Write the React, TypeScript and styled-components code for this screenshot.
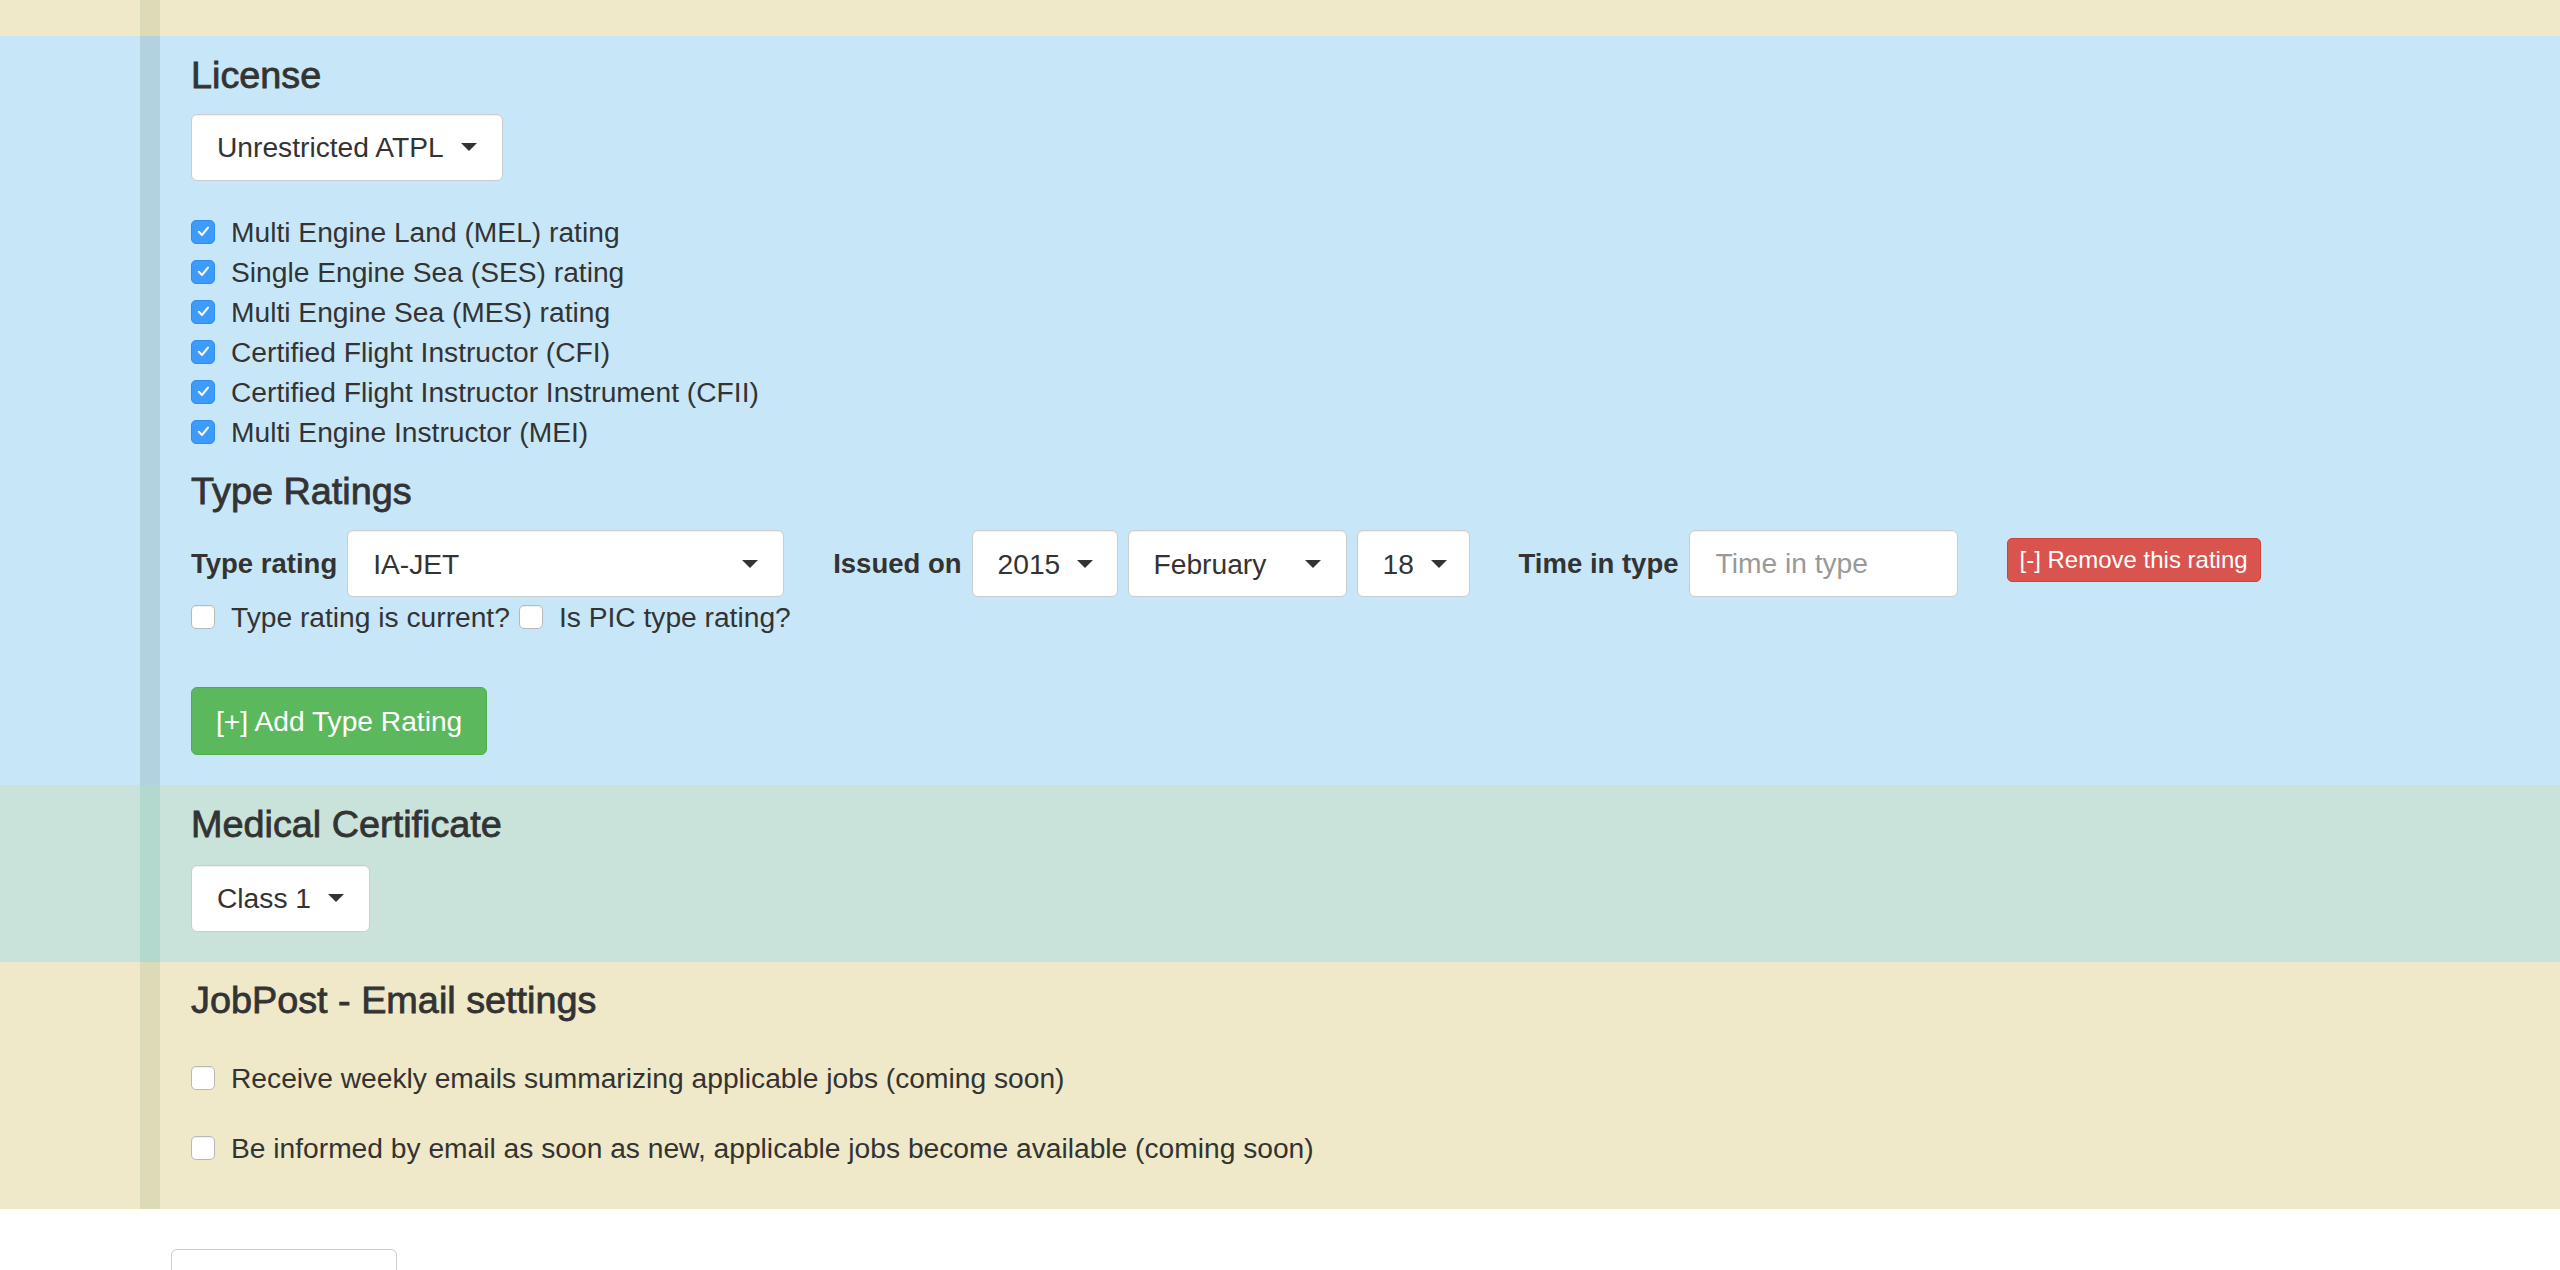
import React from 'react';
import styled, { createGlobalStyle } from 'styled-components';

const GlobalStyle = createGlobalStyle`
  html, body {
    margin: 0;
    padding: 0;
    background: #fff;
  }
  body {
    font-family: "Liberation Sans", Arial, sans-serif;
    font-size: 28.2px;
    color: #333;
  }
  * {
    box-sizing: border-box;
  }
`;

const Section = styled.section<{ $bg: string }>`
  background: ${(p) => p.$bg};
  padding-left: 140px;
`;

const Inner = styled.div<{ $bar: string; $pt: number; $pb: number; $h?: number }>`
  border-left: 20px solid ${(p) => p.$bar};
  padding: ${(p) => p.$pt}px 0 ${(p) => p.$pb}px 31px;
  ${(p) => (p.$h ? `height: ${p.$h}px;` : '')}
`;

const Heading = styled.h3`
  margin: 0;
  font-size: 37.8px;
  line-height: 39.6px;
  font-weight: 400;
  -webkit-text-stroke: 0.8px #333;
`;

const Field = styled.div<{ $mt: number }>`
  margin-top: ${(p) => p.$mt}px;
`;

const Dropdown = styled.button<{ $width?: number }>`
  display: inline-flex;
  align-items: center;
  justify-content: space-between;
  gap: 17px;
  width: ${(p) => (p.$width ? `${p.$width}px` : 'auto')};
  height: 67px;
  padding: 0 25px;
  background: #fff;
  border: 1px solid #ccc;
  border-radius: 6px;
  box-shadow: inset 0 1px 1px rgba(0, 0, 0, 0.06);
  font: inherit;
  line-height: 40px;
  color: #333;
  text-align: left;
  cursor: pointer;
`;

const Caret = styled.span`
  width: 0;
  height: 0;
  border-top: 8px solid #333;
  border-left: 8px solid transparent;
  border-right: 8px solid transparent;
  flex-shrink: 0;
`;

const CheckList = styled.div<{ $mt: number }>`
  display: flex;
  flex-direction: column;
  margin-top: ${(p) => p.$mt}px;
`;

const CheckLabel = styled.label`
  display: inline-flex;
  align-items: center;
  gap: 16px;
  height: 40px;
  line-height: 40px;
  white-space: nowrap;
  cursor: pointer;
`;

const Box = styled.span<{ $checked: boolean }>`
  display: inline-flex;
  align-items: center;
  justify-content: center;
  width: 24px;
  height: 24px;
  flex-shrink: 0;
  border-radius: 5px;
  background: ${(p) => (p.$checked ? '#3d9bfb' : '#fff')};
  border: 1px solid ${(p) => (p.$checked ? '#2f8cef' : '#b8b8b8')};
  box-shadow: ${(p) => (p.$checked ? 'none' : 'inset 0 1px 1px rgba(0,0,0,0.06)')};
`;

const InlineChecks = styled.div`
  display: flex;
  gap: 9px;
`;

const FormRow = styled.div`
  display: flex;
  align-items: center;
  gap: 49px;
  margin-top: 19px;
`;

const Group = styled.div`
  display: flex;
  align-items: center;
  gap: 10px;
`;

const BoldLabel = styled.span`
  font-size: 27.5px;
  font-weight: 700;
  white-space: nowrap;
`;

const TextInput = styled.input`
  width: 269px;
  height: 67px;
  padding: 0 26px;
  border: 1px solid #ccc;
  border-radius: 6px;
  box-shadow: inset 0 1px 1px rgba(0, 0, 0, 0.06);
  font: inherit;
  color: #333;
  background: #fff;
  outline: none;
  &::placeholder {
    color: #999;
  }
`;

const RemoveButton = styled.button`
  height: 44px;
  padding: 0 12px;
  margin-bottom: 8px;
  background: #d9534f;
  border: 1px solid #d43f3a;
  border-radius: 5px;
  color: #fff;
  font-family: inherit;
  font-size: 24px;
  line-height: 42px;
  white-space: nowrap;
  cursor: pointer;
`;

const AddButton = styled.button`
  margin-top: 50px;
  height: 68px;
  padding: 0 24px;
  background: #5cb85c;
  border: 1px solid #4cae4c;
  border-radius: 6px;
  color: #fff;
  font: inherit;
  line-height: 40px;
  cursor: pointer;
`;

const EmailRow = styled.div<{ $mt: number }>`
  margin-top: ${(p) => p.$mt}px;
`;

const Footer = styled.div`
  padding: 40px 0 0 171px;
`;

const OutlineButton = styled.button`
  width: 226px;
  height: 70px;
  background: #fff;
  border: 1px solid #ccc;
  border-radius: 6px;
  font: inherit;
`;

const Checkbox: React.FC<{ checked?: boolean; label: string }> = ({ checked = false, label }) => (
  <CheckLabel>
    <Box $checked={checked}>
      {checked && (
        <svg width="15" height="15" viewBox="0 0 15 15">
          <path d="M2.8 7.8 L6 11 L12 3.6" fill="none" stroke="#fff" strokeWidth="2" strokeLinecap="round" strokeLinejoin="round" />
        </svg>
      )}
    </Box>
    {label}
  </CheckLabel>
);

const Select: React.FC<{ value: string; width?: number }> = ({ value, width }) => (
  <Dropdown type="button" $width={width}>
    <span>{value}</span>
    <Caret />
  </Dropdown>
);

const ratings = [
  'Multi Engine Land (MEL) rating',
  'Single Engine Sea (SES) rating',
  'Multi Engine Sea (MES) rating',
  'Certified Flight Instructor (CFI)',
  'Certified Flight Instructor Instrument (CFII)',
  'Multi Engine Instructor (MEI)',
];

const BEIGE = '#efe9c9';
const BEIGE_BAR = '#dddab8';

const App: React.FC = () => (
  <>
    <GlobalStyle />
    <Section $bg={BEIGE}>
      <Inner $bar={BEIGE_BAR} $pt={0} $pb={0} $h={36} />
    </Section>

    <Section $bg="#c7e7f8">
      <Inner $bar="#b3d2e0" $pt={20} $pb={30}>
        <Heading>License</Heading>
        <Field $mt={18}>
          <Select value="Unrestricted ATPL" />
        </Field>
        <CheckList $mt={31}>
          {ratings.map((r) => (
            <Checkbox key={r} checked label={r} />
          ))}
        </CheckList>
        <Field $mt={20}>
          <Heading>Type Ratings</Heading>
        </Field>
        <FormRow>
          <Group>
            <BoldLabel>Type rating</BoldLabel>
            <Select value="IA-JET" width={437} />
          </Group>
          <Group>
            <BoldLabel>Issued on</BoldLabel>
            <Select value="2015" width={146} />
            <Select value="February" width={219} />
            <Select value="18" width={113} />
          </Group>
          <Group>
            <BoldLabel>Time in type</BoldLabel>
            <TextInput placeholder="Time in type" />
          </Group>
          <RemoveButton type="button">[-] Remove this rating</RemoveButton>
        </FormRow>
        <InlineChecks>
          <Checkbox label="Type rating is current?" />
          <Checkbox label="Is PIC type rating?" />
        </InlineChecks>
        <AddButton type="button">[+] Add Type Rating</AddButton>
      </Inner>
    </Section>

    <Section $bg="#c9e3da">
      <Inner $bar="#b3d8ce" $pt={20} $pb={30}>
        <Heading>Medical Certificate</Heading>
        <Field $mt={20}>
          <Select value="Class 1" />
        </Field>
      </Inner>
    </Section>

    <Section $bg={BEIGE}>
      <Inner $bar={BEIGE_BAR} $pt={19} $pb={41}>
        <Heading>JobPost - Email settings</Heading>
        <EmailRow $mt={38}>
          <Checkbox label="Receive weekly emails summarizing applicable jobs (coming soon)" />
        </EmailRow>
        <EmailRow $mt={30}>
          <Checkbox label="Be informed by email as soon as new, applicable jobs become available (coming soon)" />
        </EmailRow>
      </Inner>
    </Section>

    <Footer>
      <OutlineButton type="button" aria-label="Save" />
    </Footer>
  </>
);

export default App;
